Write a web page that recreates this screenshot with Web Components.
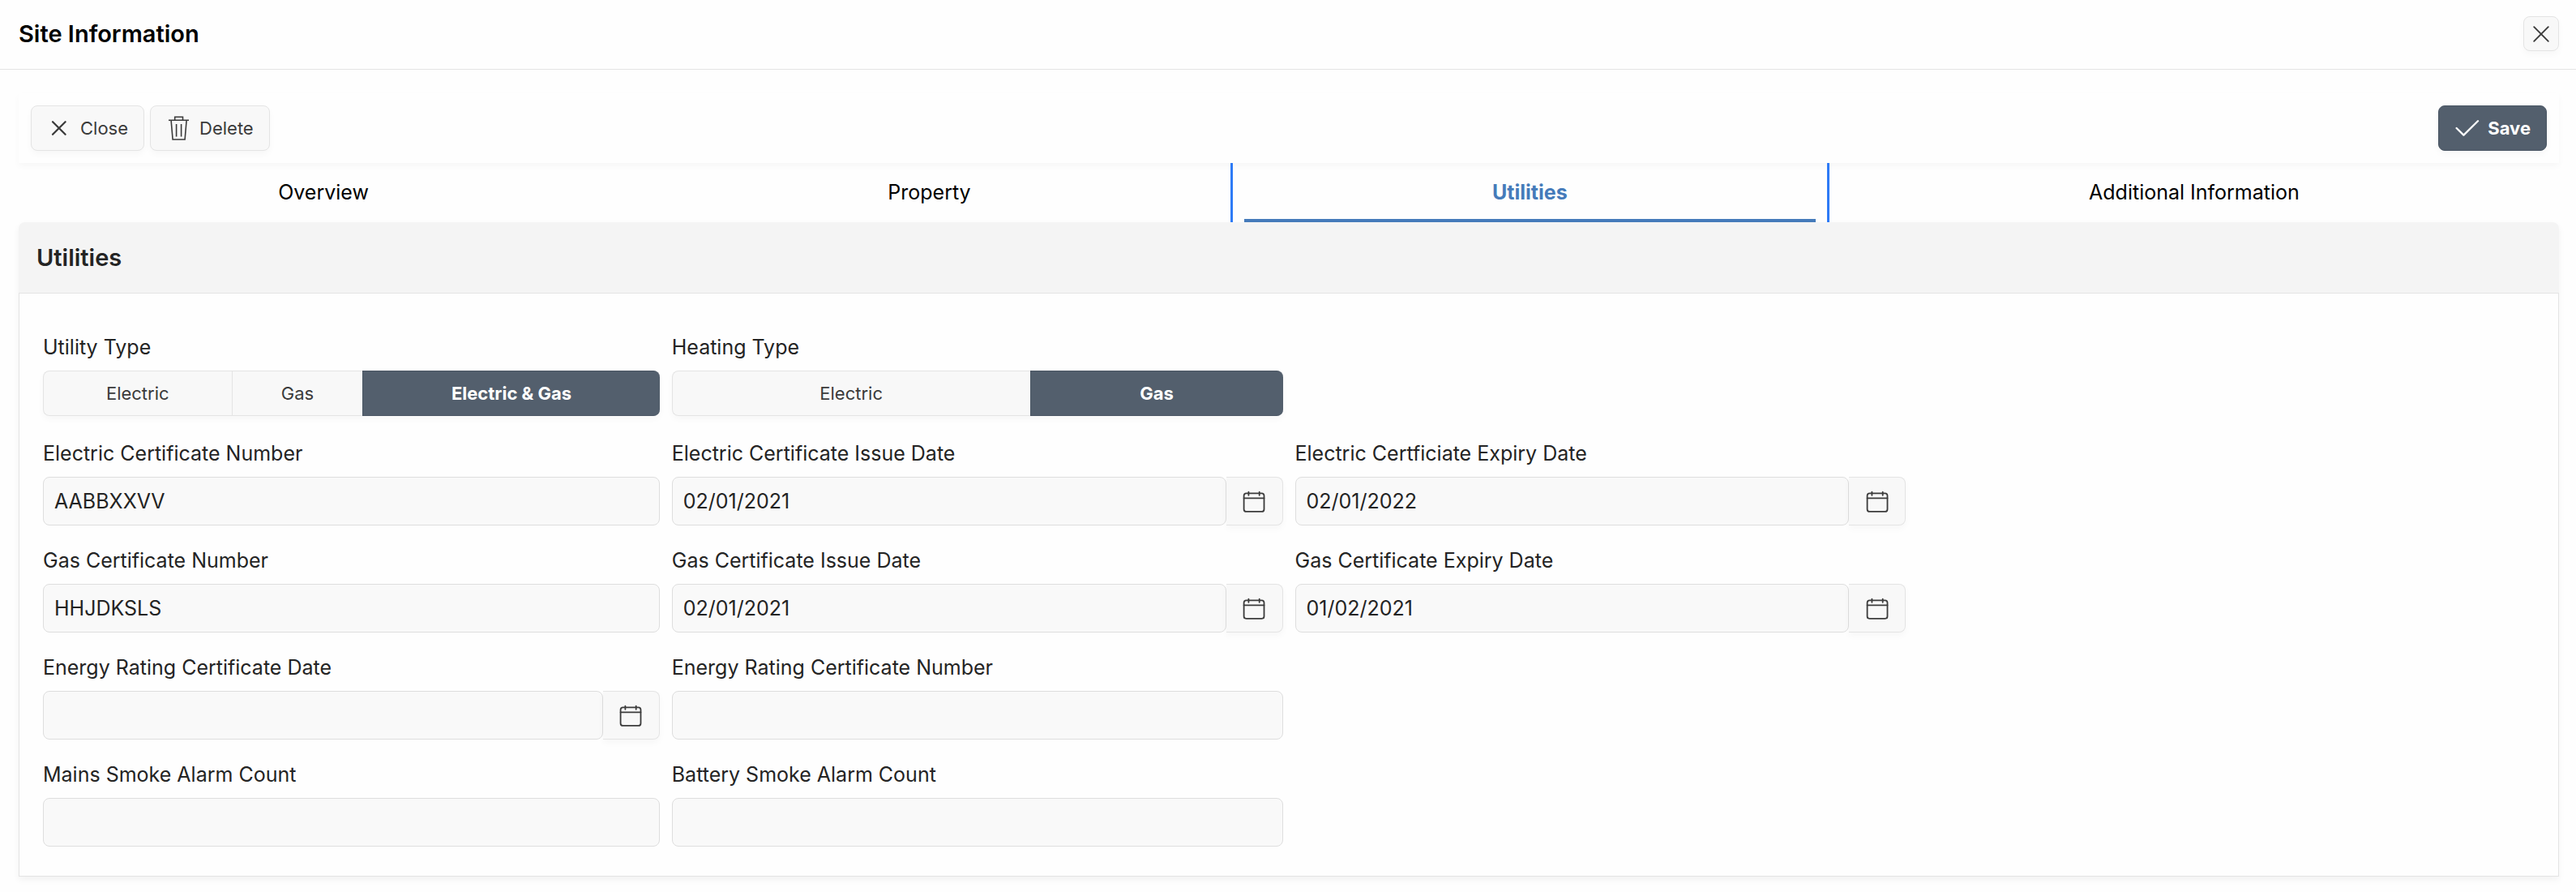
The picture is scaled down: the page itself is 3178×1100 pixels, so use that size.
<!DOCTYPE html>
<html lang="en">
<head>
<meta charset="UTF-8">
<meta name="viewport" content="width=device-width, initial-scale=1">
<title>Site Information</title>
<style>
  * { box-sizing: border-box; }
  body {
    margin: 0;
    background: #fefefe;
    color: #242424;
    font-family: Inter, "Liberation Sans", sans-serif;
    font-size: 25px;
    line-height: 34px;
    --surface: #f8f8f8;
    --line: #e4e4e4;
    --dark: #535f6d;
    --shadow: 0 4px 8px rgba(0, 0, 0, 0.03);
  }
  .content { padding: 29px 21px 19px 23px; }
</style>
</head>
<body>

<site-header>Site Information</site-header>

<main class="content">
  <form-toolbar>
    <tool-button icon="close">Close</tool-button>
    <tool-button icon="trash">Delete</tool-button>
    <tool-button slot="end" icon="check" primary>Save</tool-button>
  </form-toolbar>

  <tab-bar tabs="Overview|Property|Utilities|Additional Information" current="Utilities"></tab-bar>

  <form-card heading="Utilities">
    <choice-field label="Utility Type" options="Electric|Gas|Electric &amp; Gas" value="Electric &amp; Gas"></choice-field>
    <choice-field label="Heating Type" options="Electric|Gas" value="Gas"></choice-field>

    <text-field class="first" label="Electric Certificate Number" value="AABBXXVV"></text-field>
    <text-field date label="Electric Certificate Issue Date" value="02/01/2021"></text-field>
    <text-field date label="Electric Certficiate Expiry Date" value="02/01/2022"></text-field>

    <text-field class="first" label="Gas Certificate Number" value="HHJDKSLS"></text-field>
    <text-field date label="Gas Certificate Issue Date" value="02/01/2021"></text-field>
    <text-field date label="Gas Certificate Expiry Date" value="01/02/2021"></text-field>

    <text-field class="first" date label="Energy Rating Certificate Date"></text-field>
    <text-field label="Energy Rating Certificate Number"></text-field>

    <text-field class="first" label="Mains Smoke Alarm Count"></text-field>
    <text-field label="Battery Smoke Alarm Count"></text-field>
  </form-card>
</main>

<script>
const icons = {
  close: `<svg width="32" height="32" viewBox="0 0 32 32" fill="none" stroke="currentColor" stroke-width="2.3" stroke-linecap="round"><path d="M8 8.2l15.6 15.6M23.6 8.2L8 23.8"/></svg>`,
  dismiss: `<svg width="32" height="32" viewBox="0 0 32 32" fill="none" stroke="currentColor" stroke-width="1.9" stroke-linecap="round"><path d="M7.2 7.2l17.6 17.6M24.8 7.2L7.2 24.8"/></svg>`,
  trash: `<svg width="32" height="32" viewBox="0 0 32 32" fill="none" stroke="currentColor" stroke-width="1.6"><path d="M4 6.2h25M11.7 6V2.2h9.8V6M7.1 6.5L9.1 30h15l2-23.5M13.6 11v15.5M19.6 11v15.5"/></svg>`,
  check: `<svg width="32" height="32" viewBox="0 0 32 32" fill="none" stroke="currentColor" stroke-width="2.3" stroke-linecap="round" stroke-linejoin="round"><path d="M3.6 16l8.8 8.6L30 7.2"/></svg>`,
  calendar: `<svg width="32" height="32" viewBox="0 0 32 32" fill="none" stroke="currentColor" stroke-width="1.8" stroke-linecap="round"><rect x="3.6" y="6.3" width="24.9" height="22.6" rx="3"/><path d="M3.6 12.3h24.9M9.4 4.6v4.2M22.7 4.6v4.2"/></svg>`,
};

class SiteHeader extends HTMLElement {
  constructor() {
    super();
    this.attachShadow({ mode: 'open' });
    this.shadowRoot.innerHTML = `
      <style>
        :host {
          display: flex;
          align-items: center;
          justify-content: space-between;
          padding: 20px 21px 22px 23px;
          border-bottom: 1px solid var(--line);
        }
        h1 {
          margin: 0;
          color: #000;
          font-size: 29px;
          font-weight: 600;
        }
        button {
          display: flex;
          align-items: center;
          justify-content: center;
          width: 44px;
          height: 43px;
          padding: 0;
          border: 1px solid var(--line);
          border-radius: 8px;
          background: var(--surface);
          box-shadow: var(--shadow);
          color: #3b3b3b;
        }
        svg { flex: none; }
      </style>
      <h1><slot></slot></h1>
      <button type="button" aria-label="Close window">${icons.dismiss}</button>
    `;
  }
}

class FormToolbar extends HTMLElement {
  constructor() {
    super();
    this.attachShadow({ mode: 'open' });
    this.shadowRoot.innerHTML = `
      <style>
        :host {
          display: flex;
          justify-content: space-between;
          padding: 15px;
          box-shadow: var(--shadow);
        }
        div { display: flex; gap: 7px; }
      </style>
      <div><slot></slot></div>
      <div><slot name="end"></slot></div>
    `;
  }
}

class ToolButton extends HTMLElement {
  constructor() {
    super();
    this.attachShadow({ mode: 'open' });
  }

  connectedCallback() {
    this.shadowRoot.innerHTML = `
      <style>
        :host { display: block; }
        button {
          display: flex;
          align-items: center;
          gap: 10px;
          height: 56px;
          padding: 0 19px 0 18px;
          border: 1px solid var(--line);
          border-radius: 8px;
          background: var(--surface);
          box-shadow: var(--shadow);
          color: #3b3b3b;
          font: inherit;
          font-size: 22px;
        }
        :host([primary]) button {
          border-color: #4a5664;
          background: var(--dark);
          color: #fff;
          font-weight: 700;
        }
      </style>
      <button type="button">${icons[this.getAttribute('icon')]}<slot></slot></button>
    `;
  }
}

class TabBar extends HTMLElement {
  constructor() {
    super();
    this.attachShadow({ mode: 'open' });
  }

  connectedCallback() {
    const current = this.getAttribute('current');
    const links = this.getAttribute('tabs').split('|').map(name => `
      <a href="#" ${name === current ? 'aria-current="page"' : ''}><span>${name}</span></a>
    `).join('');

    this.shadowRoot.innerHTML = `
      <style>
        :host { display: block; }
        nav { display: flex; }
        a {
          display: flex;
          flex: 1 1 auto;
          padding: 0 14px;
          color: #000;
          text-decoration: none;
          text-align: center;
        }
        span {
          flex: 1;
          padding: 19px 0 16px;
          border-bottom: 4px solid transparent;
        }
        a[aria-current] {
          border: solid #2e7bf6;
          border-width: 0 3px;
          color: #457bba;
          font-weight: 700;
        }
        a[aria-current] span { border-color: #457bba; }
      </style>
      <nav>${links}</nav>
    `;
  }
}

class FormCard extends HTMLElement {
  constructor() {
    super();
    this.attachShadow({ mode: 'open' });
  }

  connectedCallback() {
    this.shadowRoot.innerHTML = `
      <style>
        :host {
          display: block;
          border-radius: 8px 8px 0 0;
          box-shadow: 0 4px 8px rgba(0, 0, 0, 0.05);
        }
        h2 {
          margin: 0;
          padding: 27px 22px 26px;
          border-radius: 8px 8px 0 0;
          background: #f4f4f4;
          font-size: 29px;
          font-weight: 600;
        }
        .body {
          display: grid;
          grid-template-columns: 761fr 754fr 754fr 761fr;
          gap: 26px 15px;
          padding: 49px 29px 36px;
          border: 1px solid var(--line);
        }
        ::slotted(.first) { grid-column-start: 1; }
      </style>
      <h2>${this.getAttribute('heading')}</h2>
      <div class="body"><slot></slot></div>
    `;
  }
}

class ChoiceField extends HTMLElement {
  constructor() {
    super();
    this.attachShadow({ mode: 'open' });
  }

  connectedCallback() {
    const value = this.getAttribute('value');
    const options = this.getAttribute('options').split('|').map(name => `
      <label><input type="radio" name="choice" ${name === value ? 'checked' : ''}>${name.replace('&', '&amp;')}</label>
    `).join('');

    this.shadowRoot.innerHTML = `
      <style>
        :host { display: block; min-width: 0; }
        .name { margin-bottom: 12px; }
        .group {
          display: table;
          width: 100%;
          margin-bottom: 3px;
          border-radius: 8px;
          box-shadow: var(--shadow);
        }
        label {
          display: table-cell;
          box-sizing: border-box;
          height: 56px;
          padding: 0 22px;
          border: 1px solid var(--line);
          border-right-width: 0;
          background: var(--surface);
          color: #3b3b3b;
          font-size: 22px;
          text-align: center;
          vertical-align: middle;
        }
        label:first-child { border-radius: 8px 0 0 8px; }
        label:last-child { border-radius: 0 8px 8px 0; }
        label:has(:checked) {
          border-color: #4a5664;
          background: var(--dark);
          color: #fff;
          font-weight: 700;
        }
        input {
          position: absolute;
          margin: 0;
          opacity: 0;
        }
      </style>
      <div class="name" id="name">${this.getAttribute('label')}</div>
      <div class="group" role="radiogroup" aria-labelledby="name">${options}</div>
    `;
  }
}

class TextField extends HTMLElement {
  constructor() {
    super();
    this.attachShadow({ mode: 'open' });
  }

  connectedCallback() {
    const picker = this.hasAttribute('date')
      ? `<button type="button" aria-label="Pick a date">${icons.calendar}</button>`
      : '';

    this.shadowRoot.innerHTML = `
      <style>
        :host { display: block; min-width: 0; }
        label { display: block; margin-bottom: 12px; }
        .control { display: flex; }
        input {
          flex: 1;
          min-width: 0;
          box-sizing: border-box;
          height: 60px;
          padding: 0 13px;
          border: 1px solid #dedede;
          border-radius: 8px;
          background: #f9f9f9;
          color: inherit;
          font: inherit;
        }
        button {
          display: flex;
          align-items: center;
          justify-content: center;
          width: 70px;
          padding: 0;
          border: 1px solid var(--line);
          border-left-width: 0;
          border-radius: 0 8px 8px 0;
          background: var(--surface);
          box-shadow: var(--shadow);
          color: #3b3b3b;
        }
      </style>
      <label for="field">${this.getAttribute('label')}</label>
      <div class="control"><input id="field" type="text" value="${this.getAttribute('value') || ''}">${picker}</div>
    `;
  }
}

customElements.define('site-header', SiteHeader);
customElements.define('form-toolbar', FormToolbar);
customElements.define('tool-button', ToolButton);
customElements.define('tab-bar', TabBar);
customElements.define('form-card', FormCard);
customElements.define('choice-field', ChoiceField);
customElements.define('text-field', TextField);
</script>
</body>
</html>
